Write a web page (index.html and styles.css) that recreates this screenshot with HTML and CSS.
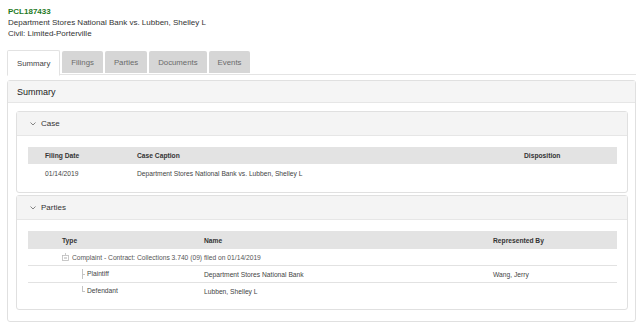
FILE: index.html
```html
<!DOCTYPE html>
<html lang="en">
<head>
  <meta charset="UTF-8" />
  <title>PCL187433 - Case Summary</title>
  <link rel="stylesheet" href="styles.css">
</head>
<body>
  <div class="page">
    <header class="case-head">
      <div class="case-no">PCL187433</div>
      <div>Department Stores National Bank vs. Lubben, Shelley L</div>
      <div>Civil: Limited-Porterville</div>
    </header>

    <nav class="tabs">
      <a class="tab active" href="#summary">Summary</a>
      <a class="tab" href="#filings">Filings</a>
      <a class="tab" href="#parties">Parties</a>
      <a class="tab" href="#documents">Documents</a>
      <a class="tab" href="#events">Events</a>
    </nav>

    <section class="panel outer" id="summary">
      <h2 class="panel-title">Summary</h2>
      <div class="panel-body">

        <div class="panel sub">
          <h3 class="sub-title">
            <svg class="chev" width="6" height="4" viewBox="0 0 6 4"><polyline points="0.5,0.5 3,3 5.5,0.5" fill="none" stroke="#777" stroke-width="0.9"/></svg>
            Case
          </h3>
          <div class="sub-body">
            <table class="grid case-grid">
              <colgroup><col class="c1"><col class="c2"><col class="c3"></colgroup>
              <thead>
                <tr><th>Filing Date</th><th>Case Caption</th><th>Disposition</th></tr>
              </thead>
              <tbody>
                <tr><td>01/14/2019</td><td>Department Stores National Bank vs. Lubben, Shelley L</td><td></td></tr>
              </tbody>
            </table>
          </div>
        </div>

        <div class="panel sub parties">
          <h3 class="sub-title">
            <svg class="chev" width="6" height="4" viewBox="0 0 6 4"><polyline points="0.5,0.5 3,3 5.5,0.5" fill="none" stroke="#777" stroke-width="0.9"/></svg>
            Parties
          </h3>
          <div class="sub-body">
            <table class="grid party-grid">
              <colgroup><col class="p0"><col class="p1"><col class="p2"><col class="p3"></colgroup>
              <thead>
                <tr><th class="gap"></th><th>Type</th><th>Name</th><th>Represented By</th></tr>
              </thead>
              <tbody>
                <tr>
                  <td class="gap"></td>
                  <td colspan="3" class="filing">
                    <svg class="collapse" width="7" height="8" viewBox="0 0 7 8"><line x1="3.5" y1="0" x2="3.5" y2="2" stroke="#bbb" stroke-width="0.8"/><rect x="0.5" y="2.5" width="6" height="5" fill="#fff" stroke="#bbb" stroke-width="0.8"/><line x1="2" y1="5" x2="5" y2="5" stroke="#999" stroke-width="0.8"/></svg>Complaint - Contract: Collections 3.740 (09) filed on 01/14/2019
                  </td>
                </tr>
                <tr class="line">
                  <td class="gap"></td>
                  <td><span class="branch mid"></span>Plaintiff</td>
                  <td>Department Stores National Bank</td>
                  <td>Wang, Jerry</td>
                </tr>
                <tr class="line">
                  <td class="gap"></td>
                  <td><span class="branch last"></span>Defendant</td>
                  <td>Lubben, Shelley L</td>
                  <td></td>
                </tr>
              </tbody>
            </table>
          </div>
        </div>

      </div>
    </section>
  </div>
</body>
</html>
```

FILE: styles.css
```css
body {
  margin: 0;
  font-family: "Liberation Sans", Arial, sans-serif;
  color: #333;
  background: #fff;
}

.page {
  padding: 6px 4px 0 7px;
}

.case-head {
  padding-left: 1px;
  font-size: 8px;
  line-height: 11px;
  color: #333;
}

.case-no {
  color: #1f7a1f;
  font-weight: bold;
}

.tabs {
  display: flex;
  gap: 2px;
  margin-top: 11px;
  border-bottom: 1px solid #e4e4e4;
  height: 24px;
}

.tab {
  display: flex;
  align-items: center;
  height: 22px;
  margin-top: 1px;
  padding: 0 9px;
  background: #d6d6d6;
  color: #6a6a6a;
  font-size: 7.8px;
  text-decoration: none;
  border-radius: 2px 2px 0 0;
}

.tab.active {
  height: 24px;
  margin-top: 0;
  padding: 0 9px;
  background: #fff;
  color: #444;
  border: 1px solid #e2e2e2;
  border-bottom: 1px solid #fff;
}

.panel {
  border: 1px solid #e0e0e0;
  border-radius: 3px;
  background: #fff;
}

.outer {
  margin-top: 5px;
}

.panel-title {
  margin: 0;
  height: 21px;
  padding-left: 9px;
  display: flex;
  align-items: center;
  background: #f5f5f5;
  border-bottom: 1px solid #e6e6e6;
  font-size: 9px;
  font-weight: normal;
  color: #222;
}

.panel-body {
  padding: 8px 7px 11px 8px;
}

.sub-title {
  margin: 0;
  height: 23px;
  padding-left: 13px;
  display: flex;
  align-items: center;
  gap: 5px;
  background: #f4f4f4;
  border-bottom: 1px solid #e6e6e6;
  font-size: 8px;
  font-weight: normal;
  color: #333;
}

.chev {
  display: block;
}

.sub-body {
  padding: 11px 10px 10px 11px;
}

.parties {
  margin-top: 2px;
}

.parties .sub-body {
  padding-bottom: 10px;
}

.grid {
  width: 100%;
  table-layout: fixed;
  border-collapse: collapse;
  font-size: 6.7px;
  color: #444;
}

.grid th {
  height: 17px;
  padding: 0 0 0 17px;
  background: #e3e3e3;
  text-align: left;
  font-weight: bold;
  color: #333;
}

.grid td {
  height: 17px;
  padding: 0 0 0 17px;
  white-space: nowrap;
}

.case-grid td {
  height: 18px;
}

.case-grid .c1 { width: 92px; }
.case-grid .c2 { width: 387px; }

.party-grid th {
  height: 18px;
}

.party-grid td {
  height: 16px;
}

.party-grid .p0 { width: 17px; }
.party-grid .p1 { width: 142px; }
.party-grid .p2 { width: 289px; }

.party-grid .gap {
  padding: 0;
}

.party-grid tr.line td {
  border-top: 1px solid #e2e2e2;
}

.filing {
  color: #555;
}

.collapse {
  vertical-align: -1px;
  margin-right: 3px;
}

.branch {
  display: inline-block;
  position: relative;
  width: 5px;
  height: 16px;
  margin-left: 20px;
  vertical-align: middle;
}

.branch::before {
  content: "";
  position: absolute;
  left: 0;
  top: 3px;
  bottom: 3px;
  border-left: 1px solid #c4c4c4;
}

.branch.last::before {
  bottom: 8px;
}

.branch::after {
  content: "";
  position: absolute;
  left: 0;
  top: 8px;
  width: 3px;
  border-top: 1px solid #c4c4c4;
}
```
